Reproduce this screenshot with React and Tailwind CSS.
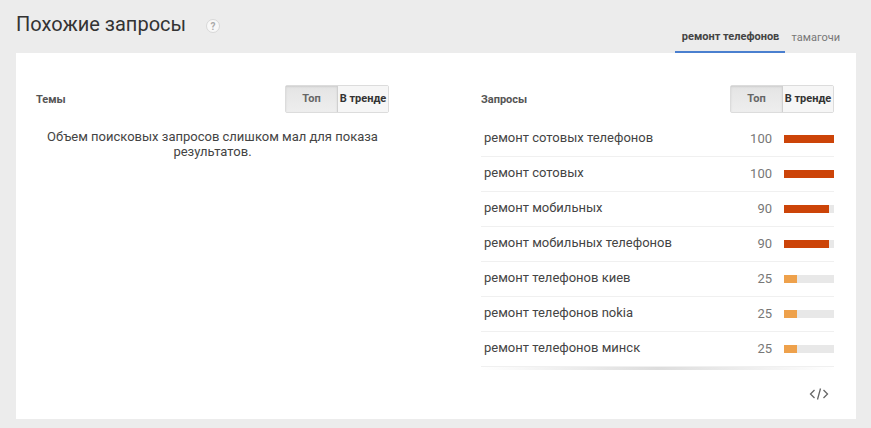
const rows = [
  { term: 'ремонт сотовых телефонов', value: 100, color: 'bg-[#cc4408]' },
  { term: 'ремонт сотовых', value: 100, color: 'bg-[#cc4408]' },
  { term: 'ремонт мобильных', value: 90, color: 'bg-[#cc4408]' },
  { term: 'ремонт мобильных телефонов', value: 90, color: 'bg-[#cc4408]' },
  { term: 'ремонт телефонов киев', value: 25, color: 'bg-[#eea14b]' },
  { term: 'ремонт телефонов nokia', value: 25, color: 'bg-[#eea14b]' },
  { term: 'ремонт телефонов минск', value: 25, color: 'bg-[#eea14b]' },
]

function Toggle() {
  return <div className="flex h-[28px] w-[104px] rounded-[2px] border border-[#dcdcdc] text-[11px] font-bold">
    <div className="flex w-[52px] items-center justify-center bg-gradient-to-b from-[#e4e4e4] to-[#eeeeee] border-r border-[#d0d0d0] pt-[1px] text-[#666] shadow-[inset_0_1px_2px_rgba(0,0,0,0.1)]">
      Топ
    </div>
    <div className="flex flex-1 items-center justify-center whitespace-nowrap bg-[#f6f6f6] pt-[1px] text-[#333]">
      В тренде
    </div>
  </div>
}

function ColumnHead({ title }) {
  return <div className="flex h-[28px] items-center justify-between">
    <span className="pt-[3px] text-[11px] font-bold text-[#555]">{title}</span>
    <Toggle />
  </div>
}

function Row({ term, value, color }) {
  return <div className="flex h-[35px] items-center border-b border-[#f0f0f0] pl-[3px]">
    <span className="flex-1 pb-[2px] text-[13px] text-[#444]">{term}</span>
    <span className="w-[40px] text-right text-[13px] text-[#777]">{value}</span>
    <div className="ml-[12px] h-[8px] w-[50px] bg-[#e8e8e8]">
      <div className={`h-full ${color}`} style={{ width: `${value}%` }} />
    </div>
  </div>
}

export default function App() {
  return <div className="h-[428px] w-[871px] overflow-hidden bg-[#ececec] font-['Roboto',sans-serif]">
    <header className="flex h-[53px] items-start pl-4 pr-[31px]">
      <h2 className="mt-[11px] text-[20px] leading-[26px] text-[#333]">Похожие запросы</h2>
      <span className="ml-[20px] mt-[19px] flex h-[14px] w-[14px] items-center justify-center rounded-full border border-[#d8d8d8] bg-[#f8f8f8] text-[10px] font-bold text-[#aaa]">?</span>
      <nav className="ml-auto flex h-[53px] text-[11px]">
        <div className="flex h-[53px] w-[110px] items-center justify-center border-b-2 border-[#4a7fcf] pl-[2px] pt-[23px] font-bold text-[#444]">
          ремонт телефонов
        </div>
        <div className="flex h-[53px] items-center pl-[7px] pt-[23px] text-[#777]">
          тамагочи
        </div>
      </nav>
    </header>
    <main className="mx-4 flex h-[366px] w-[840px] justify-between bg-white pl-5 pr-[22px] pt-8">
      <section className="w-[353px]">
        <ColumnHead title="Темы" />
        <p className="mt-[16px] text-center text-[13px] leading-[15px] text-[#444]">
          Объем поисковых запросов слишком мал для показа результатов.
        </p>
      </section>
      <section className="w-[353px]">
        <ColumnHead title="Запросы" />
        <div className="mt-[9px]">
          {rows.map(row => <Row key={row.term} {...row} />)}
        </div>
        <div className="h-[3px] bg-gradient-to-r from-white via-[#dddddd] to-white" />
        <div className="mt-[17px] flex justify-end pr-[5px]">
          <svg width="20" height="14" viewBox="0 0 20 14" fill="none" stroke="#666" strokeWidth="1.3">
            <path d="M5.5 3 1.5 7l4 4M14.5 3l4 4-4 4M11.5 1.5l-3 11" />
          </svg>
        </div>
      </section>
    </main>
  </div>
}
